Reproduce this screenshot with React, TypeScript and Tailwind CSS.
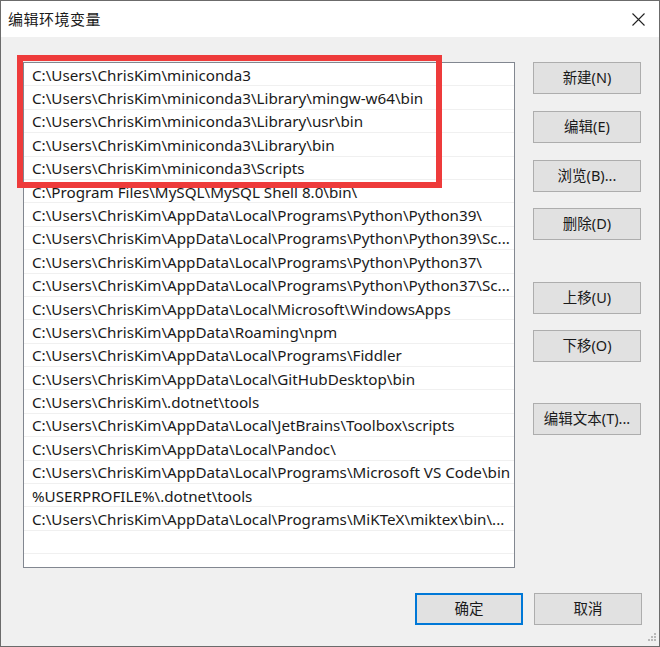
import React from "react";

const rows = [
  "C:\\Users\\ChrisKim\\miniconda3",
  "C:\\Users\\ChrisKim\\miniconda3\\Library\\mingw-w64\\bin",
  "C:\\Users\\ChrisKim\\miniconda3\\Library\\usr\\bin",
  "C:\\Users\\ChrisKim\\miniconda3\\Library\\bin",
  "C:\\Users\\ChrisKim\\miniconda3\\Scripts",
  "C:\\Program Files\\MySQL\\MySQL Shell 8.0\\bin\\",
  "C:\\Users\\ChrisKim\\AppData\\Local\\Programs\\Python\\Python39\\",
  "C:\\Users\\ChrisKim\\AppData\\Local\\Programs\\Python\\Python39\\Sc...",
  "C:\\Users\\ChrisKim\\AppData\\Local\\Programs\\Python\\Python37\\",
  "C:\\Users\\ChrisKim\\AppData\\Local\\Programs\\Python\\Python37\\Sc...",
  "C:\\Users\\ChrisKim\\AppData\\Local\\Microsoft\\WindowsApps",
  "C:\\Users\\ChrisKim\\AppData\\Roaming\\npm",
  "C:\\Users\\ChrisKim\\AppData\\Local\\Programs\\Fiddler",
  "C:\\Users\\ChrisKim\\AppData\\Local\\GitHubDesktop\\bin",
  "C:\\Users\\ChrisKim\\.dotnet\\tools",
  "C:\\Users\\ChrisKim\\AppData\\Local\\JetBrains\\Toolbox\\scripts",
  "C:\\Users\\ChrisKim\\AppData\\Local\\Pandoc\\",
  "C:\\Users\\ChrisKim\\AppData\\Local\\Programs\\Microsoft VS Code\\bin",
  "%USERPROFILE%\\.dotnet\\tools",
  "C:\\Users\\ChrisKim\\AppData\\Local\\Programs\\MiKTeX\\miktex\\bin\\...",
  "",
  "",
];

const font = { fontFamily: '"Noto Sans", "Noto Sans CJK SC", sans-serif' };

function Btn({ label, primary }: { label: string; primary?: boolean }) {
  return (
    <div
      className={
        "w-[108px] h-[32px] flex items-center justify-center bg-[#e1e1e1] text-[14.5px] text-[#1a1a1a] " +
        (primary ? "border-2 border-[#0078d7]" : "border border-[#adadad]")
      }
    >
      {label}
    </div>
  );
}

export default function App() {
  return (
    <div
      className="w-[660px] h-[647px] flex flex-col border border-[#6b6b6b] bg-[#f0f0f0] overflow-hidden"
      style={font}
    >
      <div className="h-[36px] bg-white flex items-center justify-between pl-[7px] pr-[14px] shrink-0">
        <span className="text-[15px] text-[#1a1a1a] tracking-[0.5px]">编辑环境变量</span>
        <svg width="13" height="13" viewBox="0 0 13 13" className="mt-[1px]">
          <path d="M0.5 0.5 L12.5 12.5 M12.5 0.5 L0.5 12.5" stroke="#222" strokeWidth="1.1" />
        </svg>
      </div>
      <div className="relative flex-1 flex flex-col">
        <div className="flex pt-[25px] pl-[22px]">
          <div className="w-[492px] h-[506px] border border-[#828790] bg-white overflow-hidden flex flex-col">
            {rows.map((r, i) => (
              <div
                key={i}
                className="h-[23.4px] shrink-0 border-b border-[#f0f0f0] pl-[8px] pt-[2px] flex items-center text-[15.2px] text-[#1a1a1a] whitespace-nowrap leading-none"
              >
                {r}
              </div>
            ))}
          </div>
          <div className="flex flex-col ml-[18px]">
            <Btn label="新建(N)" />
            <div className="h-[17px]" />
            <Btn label="编辑(E)" />
            <div className="h-[17px]" />
            <Btn label="浏览(B)..." />
            <div className="h-[16px]" />
            <Btn label="删除(D)" />
            <div className="h-[42px]" />
            <Btn label="上移(U)" />
            <div className="h-[16px]" />
            <Btn label="下移(O)" />
            <div className="h-[41px]" />
            <Btn label="编辑文本(T)..." />
          </div>
        </div>
        <div className="flex justify-end gap-[11px] pr-[17px] mt-[25px]">
          <Btn label="确定" primary />
          <Btn label="取消" />
        </div>
        <div className="absolute left-[16px] top-[18px] w-[425px] h-[133px] border-[6px] border-[#ee3b3b]" />
        <svg className="absolute right-[2px] bottom-[2px]" width="12" height="12" viewBox="0 0 12 12">
          <g fill="#b8b8b8">
            <rect x="9" y="1" width="2" height="2" />
            <rect x="6" y="4" width="2" height="2" />
            <rect x="9" y="4" width="2" height="2" />
            <rect x="3" y="7" width="2" height="2" />
            <rect x="6" y="7" width="2" height="2" />
            <rect x="9" y="7" width="2" height="2" />
          </g>
        </svg>
      </div>
    </div>
  );
}
